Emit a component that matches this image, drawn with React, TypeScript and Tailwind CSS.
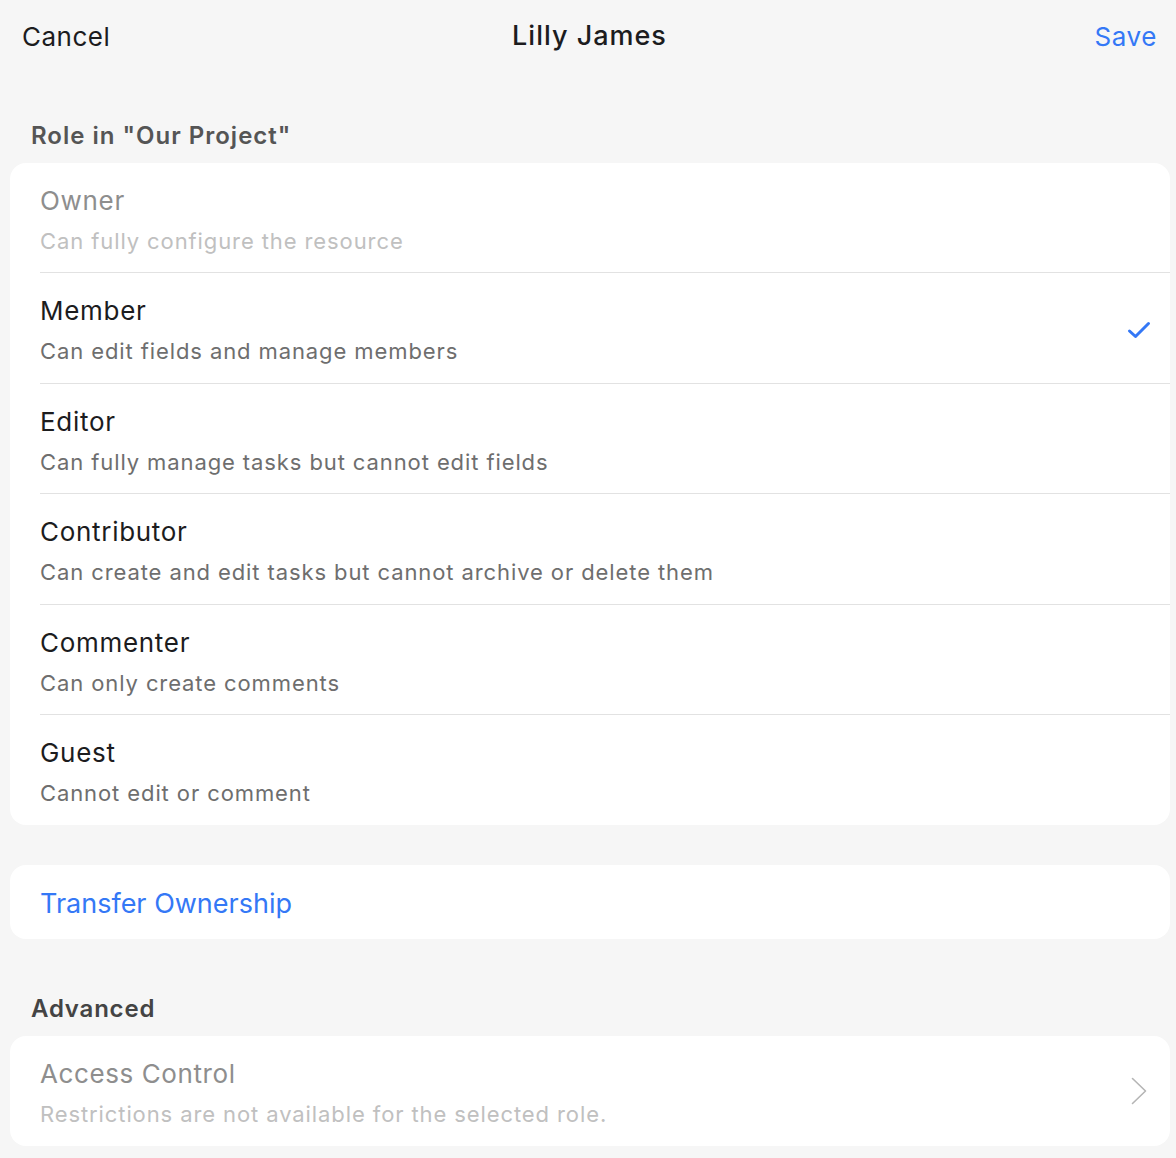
interface Role {
  name: string;
  description: string;
  disabled?: boolean;
  selected?: boolean;
}

const ROLES: Role[] = [
  { name: 'Owner', description: 'Can fully configure the resource', disabled: true },
  { name: 'Member', description: 'Can edit fields and manage members', selected: true },
  { name: 'Editor', description: 'Can fully manage tasks but cannot edit fields' },
  { name: 'Contributor', description: 'Can create and edit tasks but cannot archive or delete them' },
  { name: 'Commenter', description: 'Can only create comments' },
  { name: 'Guest', description: 'Cannot edit or comment' },
];

function CheckIcon() {
  return (
    <svg width="24" height="18" viewBox="0 0 24 18" fill="none" stroke="#3478f6" strokeWidth="3" strokeLinecap="round" strokeLinejoin="round">
      <polyline points="2.5 10 8.5 15.5 21.5 2.5" />
    </svg>
  );
}

function Chevron() {
  return (
    <svg width="16" height="28" viewBox="0 0 16 28" fill="none" stroke="#b5b5b5" strokeWidth="1.6" strokeLinecap="round" strokeLinejoin="round">
      <polyline points="1.5 1.5 14.5 14 1.5 26.5" />
    </svg>
  );
}

export default function App() {
  return (
    <div
      className="min-h-[1158px] w-[1176px] bg-[#f6f6f6] text-[#1c1c1e]"
      style={{ fontFamily: 'Inter, "Noto Sans", sans-serif' }}
    >
      {/* Nav bar */}
      <div className="grid h-[74px] grid-cols-[1fr_auto_1fr] items-center pl-[22px] pr-[19px] pb-[2px]">
        <button type="button" className="justify-self-start text-[26px] tracking-[0.5px] text-[#1c1c1e]">Cancel</button>
        <h1 className="text-[27px] font-medium tracking-[1px]">Lilly James</h1>
        <button type="button" className="justify-self-end text-[26px] tracking-[0.6px] text-[#3478f6]">Save</button>
      </div>

      <div className="pl-[10px] pr-[6px]">
        <h2 className="px-[21px] pt-[41px] pb-[6px] text-[24px] font-semibold leading-[42px] tracking-[1px] text-[#555555]">
          Role in "Our Project"
        </h2>

        {/* Roles */}
        <div className="overflow-hidden rounded-[16px] bg-white">
          {ROLES.map((role, i) => (
            <div key={role.name} className="pl-[30px]">
              <div
                className={`flex h-[110.4px] items-start pt-[18px] pr-[19px] ${
                  i < ROLES.length - 1 ? 'border-b-[1.5px] border-[#e2e2e2]' : ''
                }`}
              >
                <div className="flex-1">
                  <p className={`text-[26px] leading-[40px] tracking-[0.7px] ${role.disabled ? 'text-[#8e8e8e]' : 'text-[#1c1c1e]'}`}>
                    {role.name}
                  </p>
                  <p className={`text-[22px] leading-[40px] tracking-[0.9px] ${role.disabled ? 'text-[#c0c0c0]' : 'text-[#6e6e6e]'}`}>
                    {role.description}
                  </p>
                </div>
                {role.selected && (
                  <div className="self-center pb-[14px]">
                    <CheckIcon />
                  </div>
                )}
              </div>
            </div>
          ))}
        </div>

        {/* Transfer */}
        <div className="mt-[40px] flex h-[74px] items-center rounded-[16px] bg-white px-[30px] pt-[3px]">
          <button type="button" className="text-[27px] text-[#3478f6]">Transfer Ownership</button>
        </div>

        <h2 className="px-[21px] pt-[53px] pb-[10px] text-[24px] font-semibold leading-[34px] tracking-[0.8px] text-[#444444]">
          Advanced
        </h2>

        {/* Access control */}
        <div className="flex h-[110px] items-start rounded-[16px] bg-white pt-[18px] pl-[30px] pr-[23px]">
          <div className="flex-1">
            <p className="text-[26px] leading-[40px] tracking-[0.6px] text-[#8e8e8e]">Access Control</p>
            <p className="text-[22px] leading-[40px] tracking-[0.9px] text-[#c0c0c0]">Restrictions are not available for the selected role.</p>
          </div>
          <div className="self-center pb-[18px]">
            <Chevron />
          </div>
        </div>
      </div>
    </div>
  );
}
